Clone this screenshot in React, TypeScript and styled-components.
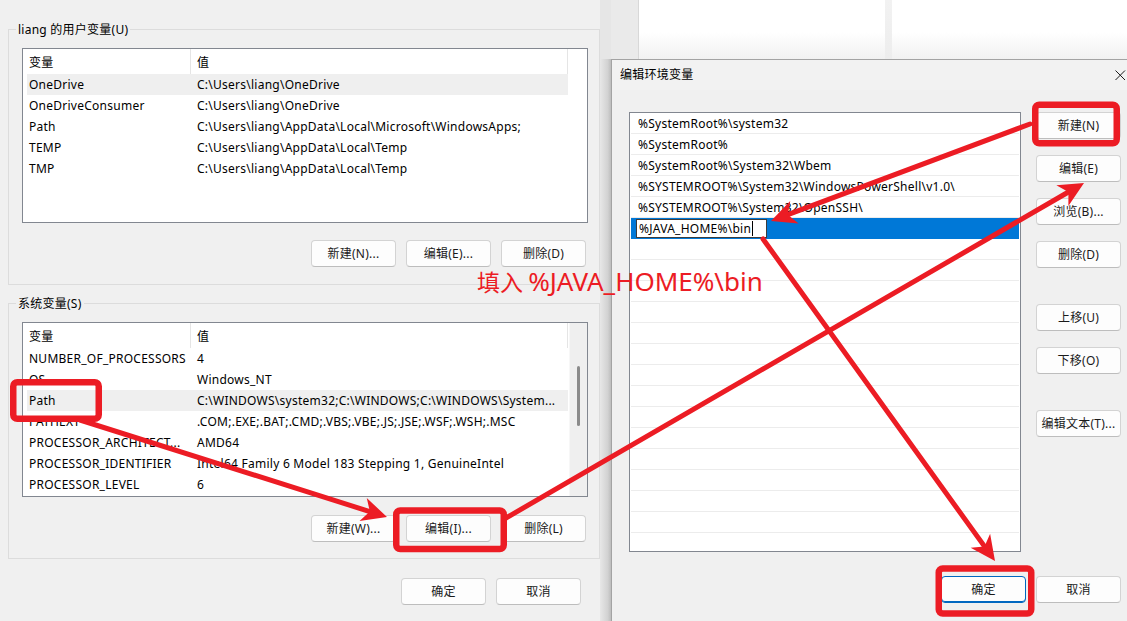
import React from "react";
import styled, { createGlobalStyle, css } from "styled-components";

const GlobalStyle = createGlobalStyle`
  html, body { margin: 0; padding: 0; }
  body {
    width: 1127px; height: 621px; overflow: hidden; background: #f0f0f0;
    font-family: "Noto Sans", "Noto Sans CJK SC", sans-serif;
    font-size: 12px; color: #000;
    letter-spacing: 0.25px;
  }
  #root { width: 1127px; height: 621px; }
`;

const Screen = styled.div`
  position: relative;
  display: flex;
  width: 1127px;
  height: 621px;
  overflow: hidden;
  background: #f0f0f0;
`;

/* ---------- left dialog ---------- */
const LeftDialog = styled.div`
  width: 600px;
  flex: none;
  box-sizing: border-box;
  padding: 21px 0 0 8px;
  display: flex;
  flex-direction: column;
`;

const Group = styled.fieldset<{ $mt?: number }>`
  width: 592px;
  box-sizing: border-box;
  margin: ${(p) => p.$mt ?? 0}px 0 0 0;
  padding: 0;
  border: 1px solid #dcdcdc;
  min-width: 0;
`;

const GroupLabel = styled.legend`
  margin-left: 7px;
  padding: 1px 2px 0;
  font-size: 12px;
  line-height: 16px;
  color: #000;
`;

const GroupBody = styled.div<{ $pb: number; $pt: number }>`
  padding: ${(p) => p.$pt}px 11px ${(p) => p.$pb}px 13px;
  display: flex;
  flex-direction: column;
`;

const ListView = styled.div`
  height: 175px;
  width: 566px;
  box-sizing: border-box;
  border: 1px solid #828790;
  background: #fff;
  display: flex;
  overflow: hidden;
`;

const ListMain = styled.div`
  flex: 1;
  padding-left: 4px;
  display: flex;
  flex-direction: column;
`;

const RowGrid = styled.div<{ $selected?: boolean; $header?: boolean }>`
  display: grid;
  width: 541px;
  grid-template-columns: 164px 377px;
  height: ${(p) => (p.$header ? 25 : 21)}px;
  align-items: center;
  background: ${(p) => (p.$selected ? "#efefef" : "transparent")};
  white-space: nowrap;
`;

const Cell = styled.div<{ $header?: boolean; $second?: boolean }>`
  padding-left: ${(p) => (p.$second ? 6 : 2)}px;
  overflow: hidden;
  height: 100%;
  display: flex;
  align-items: center;
  ${(p) =>
    p.$header &&
    css`
      border-right: 1px solid #e5e5e5;
      box-sizing: border-box;
    `}
`;

const ScrollTrack = styled.div`
  width: 18px;
  flex: none;
  background: #efefef;
  border-left: 1px solid #f7f7f7;
  box-sizing: border-box;
  display: flex;
  justify-content: center;
`;

const ScrollThumb = styled.div`
  width: 3px;
  height: 60px;
  margin-top: 43px;
  border-radius: 2px;
  background: #8b8b8b;
`;

const ButtonRow = styled.div<{ $mt: number; $pr: number; $gap?: number }>`
  display: flex;
  justify-content: flex-end;
  gap: ${(p) => p.$gap ?? 10}px;
  margin-top: ${(p) => p.$mt}px;
  padding-right: ${(p) => p.$pr}px;
`;

const Button = styled.button<{ $focused?: boolean; $mt?: number }>`
  width: 85px;
  height: 27px;
  box-sizing: border-box;
  flex: none;
  margin: ${(p) => p.$mt ?? 0}px 0 0 0;
  padding: 0;
  background: #fdfdfd;
  border: 1px solid #d3d3d3;
  border-bottom-color: #bdbdbd;
  border-radius: 4px;
  font-family: "Noto Sans", "Noto Sans CJK SC", sans-serif;
  font-size: 12px;
  letter-spacing: 0.25px;
  color: #1a1a1a;
  line-height: 25px;
  white-space: nowrap;
  ${(p) =>
    p.$focused &&
    css`
      border: 1px solid #0067c0;
      box-shadow: inset 0 -1px 0 #0067c0;
    `}
`;

/* ---------- separator shadow ---------- */
const ShadowStrip = styled.div`
  width: 11px;
  flex: none;
  background: linear-gradient(#e6e6e6, #e6e6e6) top / 100% 59px no-repeat,
    linear-gradient(to right, #e7e7e7, #d2d2d2 70%, #bdbdbd);
`;

/* ---------- right column ---------- */
const RightColumn = styled.div`
  flex: 1;
  display: flex;
  flex-direction: column;
  min-width: 0;
`;

const Backdrop = styled.div`
  height: 59px;
  flex: none;
  display: flex;
`;

const BackPanel = styled.div<{ $w?: number; $tone: "side" | "white" | "band" }>`
  ${(p) => (p.$w ? `width: ${p.$w}px; flex: none;` : "flex: 1;")}
  box-sizing: border-box;
  ${(p) =>
    p.$tone === "side"
      ? css`
          background: #eaeaea;
          border-right: 1px solid #d8d8d8;
        `
      : p.$tone === "band"
      ? css`
          background: linear-gradient(#f2f2f2, #ededed);
        `
      : css`
          background: linear-gradient(#ffffff 0%, #ffffff 55%, #f1f1f1 100%);
        `}
`;

const EditDialog = styled.div`
  flex: 1;
  background: #f0f0f0;
  border-top: 1px solid #a3a3a3;
  border-left: 1px solid #a3a3a3;
  display: flex;
  flex-direction: column;
`;

const TitleBar = styled.div`
  height: 30px;
  flex: none;
  display: flex;
  align-items: center;
  justify-content: space-between;
  padding: 0 1px 0 8px;
  background: #f2f2f2;
`;

const Title = styled.span`
  font-size: 12px;
  color: #000;
  padding-bottom: 3px;
`;

const CloseGlyph = styled.svg`
  margin-bottom: 1px;
`;

const DialogBody = styled.div`
  display: flex;
  flex-direction: column;
  padding: 22px 6px 0 17px;
`;

const BodyTop = styled.div`
  display: flex;
  gap: 15px;
`;

const EditList = styled.div`
  width: 392px;
  height: 440px;
  box-sizing: border-box;
  border: 1px solid #828790;
  background: #fff;
  overflow: hidden;
  display: flex;
  flex-direction: column;
`;

const EditRow = styled.div<{ $selected?: boolean }>`
  height: 21px;
  flex: none;
  box-sizing: border-box;
  margin: 0 1px;
  padding-left: 7px;
  border-bottom: 1px solid #ececec;
  display: flex;
  align-items: center;
  white-space: nowrap;
  ${(p) =>
    p.$selected &&
    css`
      background: #0078d7;
      border-bottom-color: #0078d7;
      padding-left: 5px;
      align-items: flex-start;
    `}
`;

const EditBox = styled.div`
  width: 131px;
  height: 19px;
  margin-top: 1px;
  box-sizing: border-box;
  background: #fff;
  border: 1px solid #3c3c3c;
  padding-left: 2px;
  display: flex;
  align-items: center;
  color: #000;
`;

const Caret = styled.span`
  display: inline-block;
  width: 1px;
  height: 15px;
  margin-left: 1px;
  background: #000;
`;

const SideButtons = styled.div`
  display: flex;
  flex-direction: column;
  gap: 16px;
`;

/* ---------- annotations ---------- */
const Overlay = styled.svg`
  position: absolute;
  left: 0;
  top: 0;
  width: 1127px;
  height: 621px;
  pointer-events: none;
`;

const Note = styled.div`
  position: absolute;
  left: 477px;
  top: 264px;
  color: #ec1c24;
  white-space: nowrap;
  line-height: 34px;
  letter-spacing: 0;
  font-family: "Noto Sans", "Noto Sans CJK SC", sans-serif;
`;

const NoteCjk = styled.span`
  font-size: 23px;
  font-family: "Noto Sans CJK SC", sans-serif;
`;

const NoteLatin = styled.span`
  font-size: 26px;
`;

const RED = "#ec1c24";

type Pt = [number, number];

function Arrow({ from, to }: { from: Pt; to: Pt }) {
  const [x1, y1] = from;
  const [x2, y2] = to;
  const dx = x2 - x1;
  const dy = y2 - y1;
  const len = Math.hypot(dx, dy);
  const ux = dx / len;
  const uy = dy / len;
  const px = -uy;
  const py = ux;
  const L = 25;
  const W = 12;
  const N = 18;
  const bx = x2 - ux * L;
  const by = y2 - uy * L;
  const nx = x2 - ux * N;
  const ny = y2 - uy * N;
  const pts = [
    [x2, y2],
    [bx + px * W, by + py * W],
    [nx, ny],
    [bx - px * W, by - py * W],
  ]
    .map((p) => p.join(","))
    .join(" ");
  return (
    <g>
      <line x1={x1} y1={y1} x2={nx} y2={ny} stroke={RED} strokeWidth={5} strokeLinecap="round" />
      <polygon points={pts} fill={RED} />
    </g>
  );
}

const userVars: [string, string][] = [
  ["OneDrive", "C:\\Users\\liang\\OneDrive"],
  ["OneDriveConsumer", "C:\\Users\\liang\\OneDrive"],
  ["Path", "C:\\Users\\liang\\AppData\\Local\\Microsoft\\WindowsApps;"],
  ["TEMP", "C:\\Users\\liang\\AppData\\Local\\Temp"],
  ["TMP", "C:\\Users\\liang\\AppData\\Local\\Temp"],
];

const sysVars: [string, string][] = [
  ["NUMBER_OF_PROCESSORS", "4"],
  ["OS", "Windows_NT"],
  ["Path", "C:\\WINDOWS\\system32;C:\\WINDOWS;C:\\WINDOWS\\System..."],
  ["PATHEXT", ".COM;.EXE;.BAT;.CMD;.VBS;.VBE;.JS;.JSE;.WSF;.WSH;.MSC"],
  ["PROCESSOR_ARCHITECT...", "AMD64"],
  ["PROCESSOR_IDENTIFIER", "Intel64 Family 6 Model 183 Stepping 1, GenuineIntel"],
  ["PROCESSOR_LEVEL", "6"],
];

const pathEntries = [
  "%SystemRoot%\\system32",
  "%SystemRoot%",
  "%SystemRoot%\\System32\\Wbem",
  "%SYSTEMROOT%\\System32\\WindowsPowerShell\\v1.0\\",
  "%SYSTEMROOT%\\System32\\OpenSSH\\",
];

function VarList({
  rows,
  selected,
  scroll,
}: {
  rows: [string, string][];
  selected: number;
  scroll?: boolean;
}) {
  return (
    <ListView>
      <ListMain>
        <RowGrid $header>
          <Cell $header>变量</Cell>
          <Cell $header $second>
            值
          </Cell>
        </RowGrid>
        {rows.map(([k, v], i) => (
          <RowGrid key={k + i} $selected={i === selected}>
            <Cell>{k}</Cell>
            <Cell $second>{v}</Cell>
          </RowGrid>
        ))}
      </ListMain>
      {scroll && (
        <ScrollTrack>
          <ScrollThumb />
        </ScrollTrack>
      )}
    </ListView>
  );
}

export default function App() {
  const emptyRows = Array.from({ length: 16 }, (_, i) => i);
  return (
    <>
      <GlobalStyle />
      <Screen>
        <LeftDialog>
          <Group>
            <GroupLabel>liang 的用户变量(U)</GroupLabel>
            <GroupBody $pt={10} $pb={17}>
              <VarList rows={userVars} selected={0} />
              <ButtonRow $mt={17} $pr={2}>
                <Button>新建(N)...</Button>
                <Button>编辑(E)...</Button>
                <Button>删除(D)</Button>
              </ButtonRow>
            </GroupBody>
          </Group>
          <Group $mt={10}>
            <GroupLabel>系统变量(S)</GroupLabel>
            <GroupBody $pt={10} $pb={16}>
              <VarList rows={sysVars} selected={2} scroll />
              <ButtonRow $mt={18} $pr={2}>
                <Button>新建(W)...</Button>
                <Button>编辑(I)...</Button>
                <Button>删除(L)</Button>
              </ButtonRow>
            </GroupBody>
          </Group>
          <ButtonRow $mt={19} $pr={19}>
            <Button>确定</Button>
            <Button>取消</Button>
          </ButtonRow>
        </LeftDialog>

        <ShadowStrip />

        <RightColumn>
          <Backdrop>
            <BackPanel $w={28} $tone="side" />
            <BackPanel $w={246} $tone="white" />
            <BackPanel $w={7} $tone="band" />
            <BackPanel $tone="white" />
          </Backdrop>
          <EditDialog>
            <TitleBar>
              <Title>编辑环境变量</Title>
              <CloseGlyph width="12" height="12" viewBox="0 0 12 12">
                <path d="M1.5 1.5 L11 11 M11 1.5 L1.5 11" stroke="#1a1a1a" strokeWidth="1" fill="none" />
              </CloseGlyph>
            </TitleBar>
            <DialogBody>
              <BodyTop>
                <EditList>
                  {pathEntries.map((p) => (
                    <EditRow key={p}>{p}</EditRow>
                  ))}
                  <EditRow $selected>
                    <EditBox>
                      %JAVA_HOME%\bin
                      <Caret />
                    </EditBox>
                  </EditRow>
                  {emptyRows.map((i) => (
                    <EditRow key={"e" + i} />
                  ))}
                </EditList>
                <SideButtons>
                  <Button>新建(N)</Button>
                  <Button>编辑(E)</Button>
                  <Button>浏览(B)...</Button>
                  <Button>删除(D)</Button>
                  <Button $mt={20}>上移(U)</Button>
                  <Button>下移(O)</Button>
                  <Button $mt={20}>编辑文本(T)...</Button>
                </SideButtons>
              </BodyTop>
              <ButtonRow $mt={24} $pr={0}>
                <Button $focused>确定</Button>
                <Button>取消</Button>
              </ButtonRow>
            </DialogBody>
          </EditDialog>
        </RightColumn>

        <Overlay viewBox="0 0 1127 621">
          <g fill="none" stroke={RED} strokeWidth={6.5}>
            <rect x={13.25} y={382.25} width={85.5} height={36.5} rx={4} />
            <rect x={396.25} y={510.5} width={107.5} height={38.5} rx={4} />
            <rect x={1035.25} y={104.75} width={81.5} height={38.5} rx={4} />
            <rect x={938.75} y={568.5} width={92.5} height={45} rx={4} />
          </g>
          <Arrow from={[80, 420]} to={[387, 517]} />
          <Arrow from={[506, 518]} to={[1084, 183]} />
          <Arrow from={[1030, 124]} to={[771, 221]} />
          <Arrow from={[763, 239]} to={[995, 561]} />
        </Overlay>
        <Note>
          <NoteCjk>填入 </NoteCjk>
          <NoteLatin>%JAVA_HOME%\bin</NoteLatin>
        </Note>
      </Screen>
    </>
  );
}
